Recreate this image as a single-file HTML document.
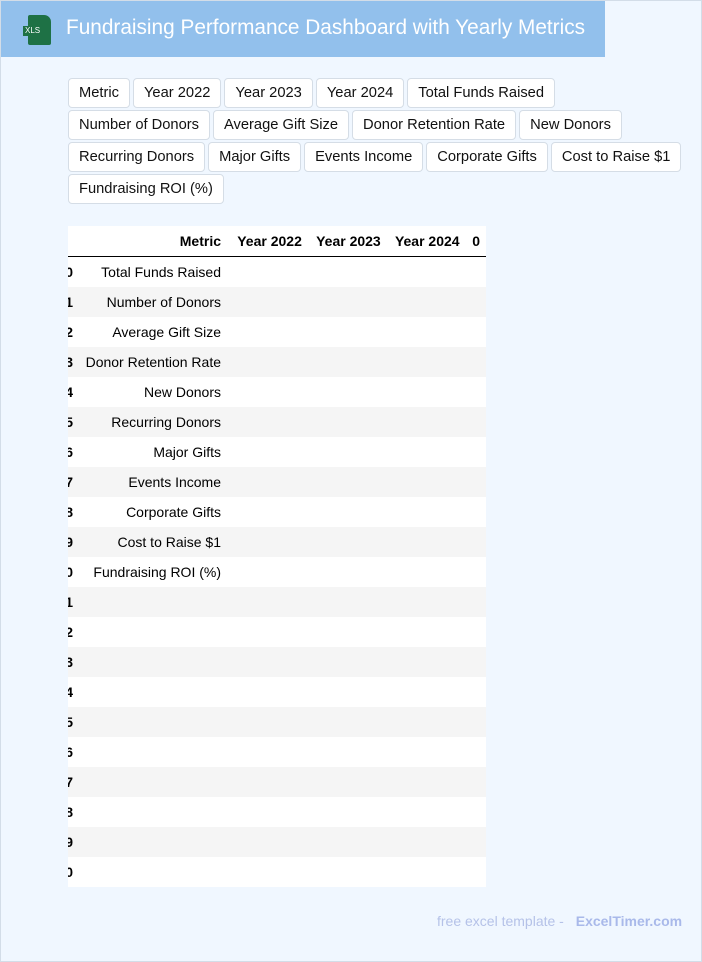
<!DOCTYPE html><html><head><style>
body{margin:0;width:702px;height:962px;background:#f0f7ff;font-family:"Liberation Sans",Roboto,sans-serif;position:relative;overflow:hidden}
.frame{position:absolute;left:0;top:0;width:700px;height:960px;border:1px solid #d3dde8}
.hdr{position:absolute;left:1px;top:1px;width:604px;height:56px;background:#92c0ec}
.hdr h1{position:absolute;left:65px;top:15px;margin:0;font-weight:normal;font-size:20.8px;color:#fff;white-space:nowrap}
.ic{position:absolute;left:27px;top:14px;width:23px;height:30px;background:#1e7145;border-radius:2px 7px 2px 2px}
.ic span{position:absolute;left:-5px;top:11px;background:#1e7145;color:#fff;font-size:8px;padding:0 2px;line-height:10px}
.btns{position:absolute;left:68px;top:78px;width:625px}
.b{float:left;height:30px;line-height:28px;padding:0 10px;margin:0 3px 2px 0;background:#fff;border:1px solid #d5dde6;border-radius:4px;font-size:14.7px;color:#111;box-sizing:border-box;white-space:nowrap}
.cl{clear:both}
table{position:absolute;left:68px;top:226px;width:418px;border-collapse:collapse;font-size:14px}
th{height:30px;text-align:right;padding:0 6px;border-bottom:1.5px solid #000;background:#fff}
td{height:30px;padding:0 8px 0 0;text-align:right;box-sizing:border-box}
tr:nth-child(odd) td{background:#f5f5f5}tr:nth-child(even) td{background:#fff}
.ft{position:absolute;left:437px;top:913px;font-size:14px;color:#b5c2e8}
.ft b{color:#a9b9ea;margin-left:8px}
</style></head><body><div class="frame"></div>
<div class="hdr"><div class="ic"><span>XLS</span></div><h1>Fundraising Performance Dashboard with Yearly Metrics</h1></div>
<div class="btns"><div class="b">Metric</div><div class="b">Year 2022</div><div class="b">Year 2023</div><div class="b">Year 2024</div><div class="b">Total Funds Raised</div><div class="cl"></div>
<div class="b">Number of Donors</div><div class="b">Average Gift Size</div><div class="b">Donor Retention Rate</div><div class="b">New Donors</div><div class="cl"></div>
<div class="b">Recurring Donors</div><div class="b">Major Gifts</div><div class="b">Events Income</div><div class="b">Corporate Gifts</div><div class="b">Cost to Raise $1</div><div class="cl"></div>
<div class="b">Fundraising ROI (%)</div></div>
<table><tr><th style="width:147px;padding-right:8px">Metric</th><th>Year 2022</th><th>Year 2023</th><th>Year 2024</th><th>0</th></tr>
<tr><td>Total Funds Raised</td><td></td><td></td><td></td><td></td></tr>
<tr><td>Number of Donors</td><td></td><td></td><td></td><td></td></tr>
<tr><td>Average Gift Size</td><td></td><td></td><td></td><td></td></tr>
<tr><td>Donor Retention Rate</td><td></td><td></td><td></td><td></td></tr>
<tr><td>New Donors</td><td></td><td></td><td></td><td></td></tr>
<tr><td>Recurring Donors</td><td></td><td></td><td></td><td></td></tr>
<tr><td>Major Gifts</td><td></td><td></td><td></td><td></td></tr>
<tr><td>Events Income</td><td></td><td></td><td></td><td></td></tr>
<tr><td>Corporate Gifts</td><td></td><td></td><td></td><td></td></tr>
<tr><td>Cost to Raise $1</td><td></td><td></td><td></td><td></td></tr>
<tr><td>Fundraising ROI (%)</td><td></td><td></td><td></td><td></td></tr>
<tr><td>&nbsp;</td><td></td><td></td><td></td><td></td></tr><tr><td>&nbsp;</td><td></td><td></td><td></td><td></td></tr>
<tr><td>&nbsp;</td><td></td><td></td><td></td><td></td></tr><tr><td>&nbsp;</td><td></td><td></td><td></td><td></td></tr>
<tr><td>&nbsp;</td><td></td><td></td><td></td><td></td></tr><tr><td>&nbsp;</td><td></td><td></td><td></td><td></td></tr>
<tr><td>&nbsp;</td><td></td><td></td><td></td><td></td></tr><tr><td>&nbsp;</td><td></td><td></td><td></td><td></td></tr>
<tr><td>&nbsp;</td><td></td><td></td><td></td><td></td></tr><tr><td>&nbsp;</td><td></td><td></td><td></td><td></td></tr>
</table>
<div style="position:absolute;left:68px;top:257px;width:5px;overflow:hidden;font-weight:bold;font-size:14px;line-height:30px;direction:rtl">
<div>0</div><div>1</div><div>2</div><div>3</div><div>4</div><div>5</div><div>6</div><div>7</div><div>8</div><div>9</div><div>0</div><div>1</div><div>2</div><div>3</div><div>4</div><div>5</div><div>6</div><div>7</div><div>8</div><div>9</div><div>0</div></div>
<div class="ft">free excel template - <b>ExcelTimer.com</b></div>
</body></html>
